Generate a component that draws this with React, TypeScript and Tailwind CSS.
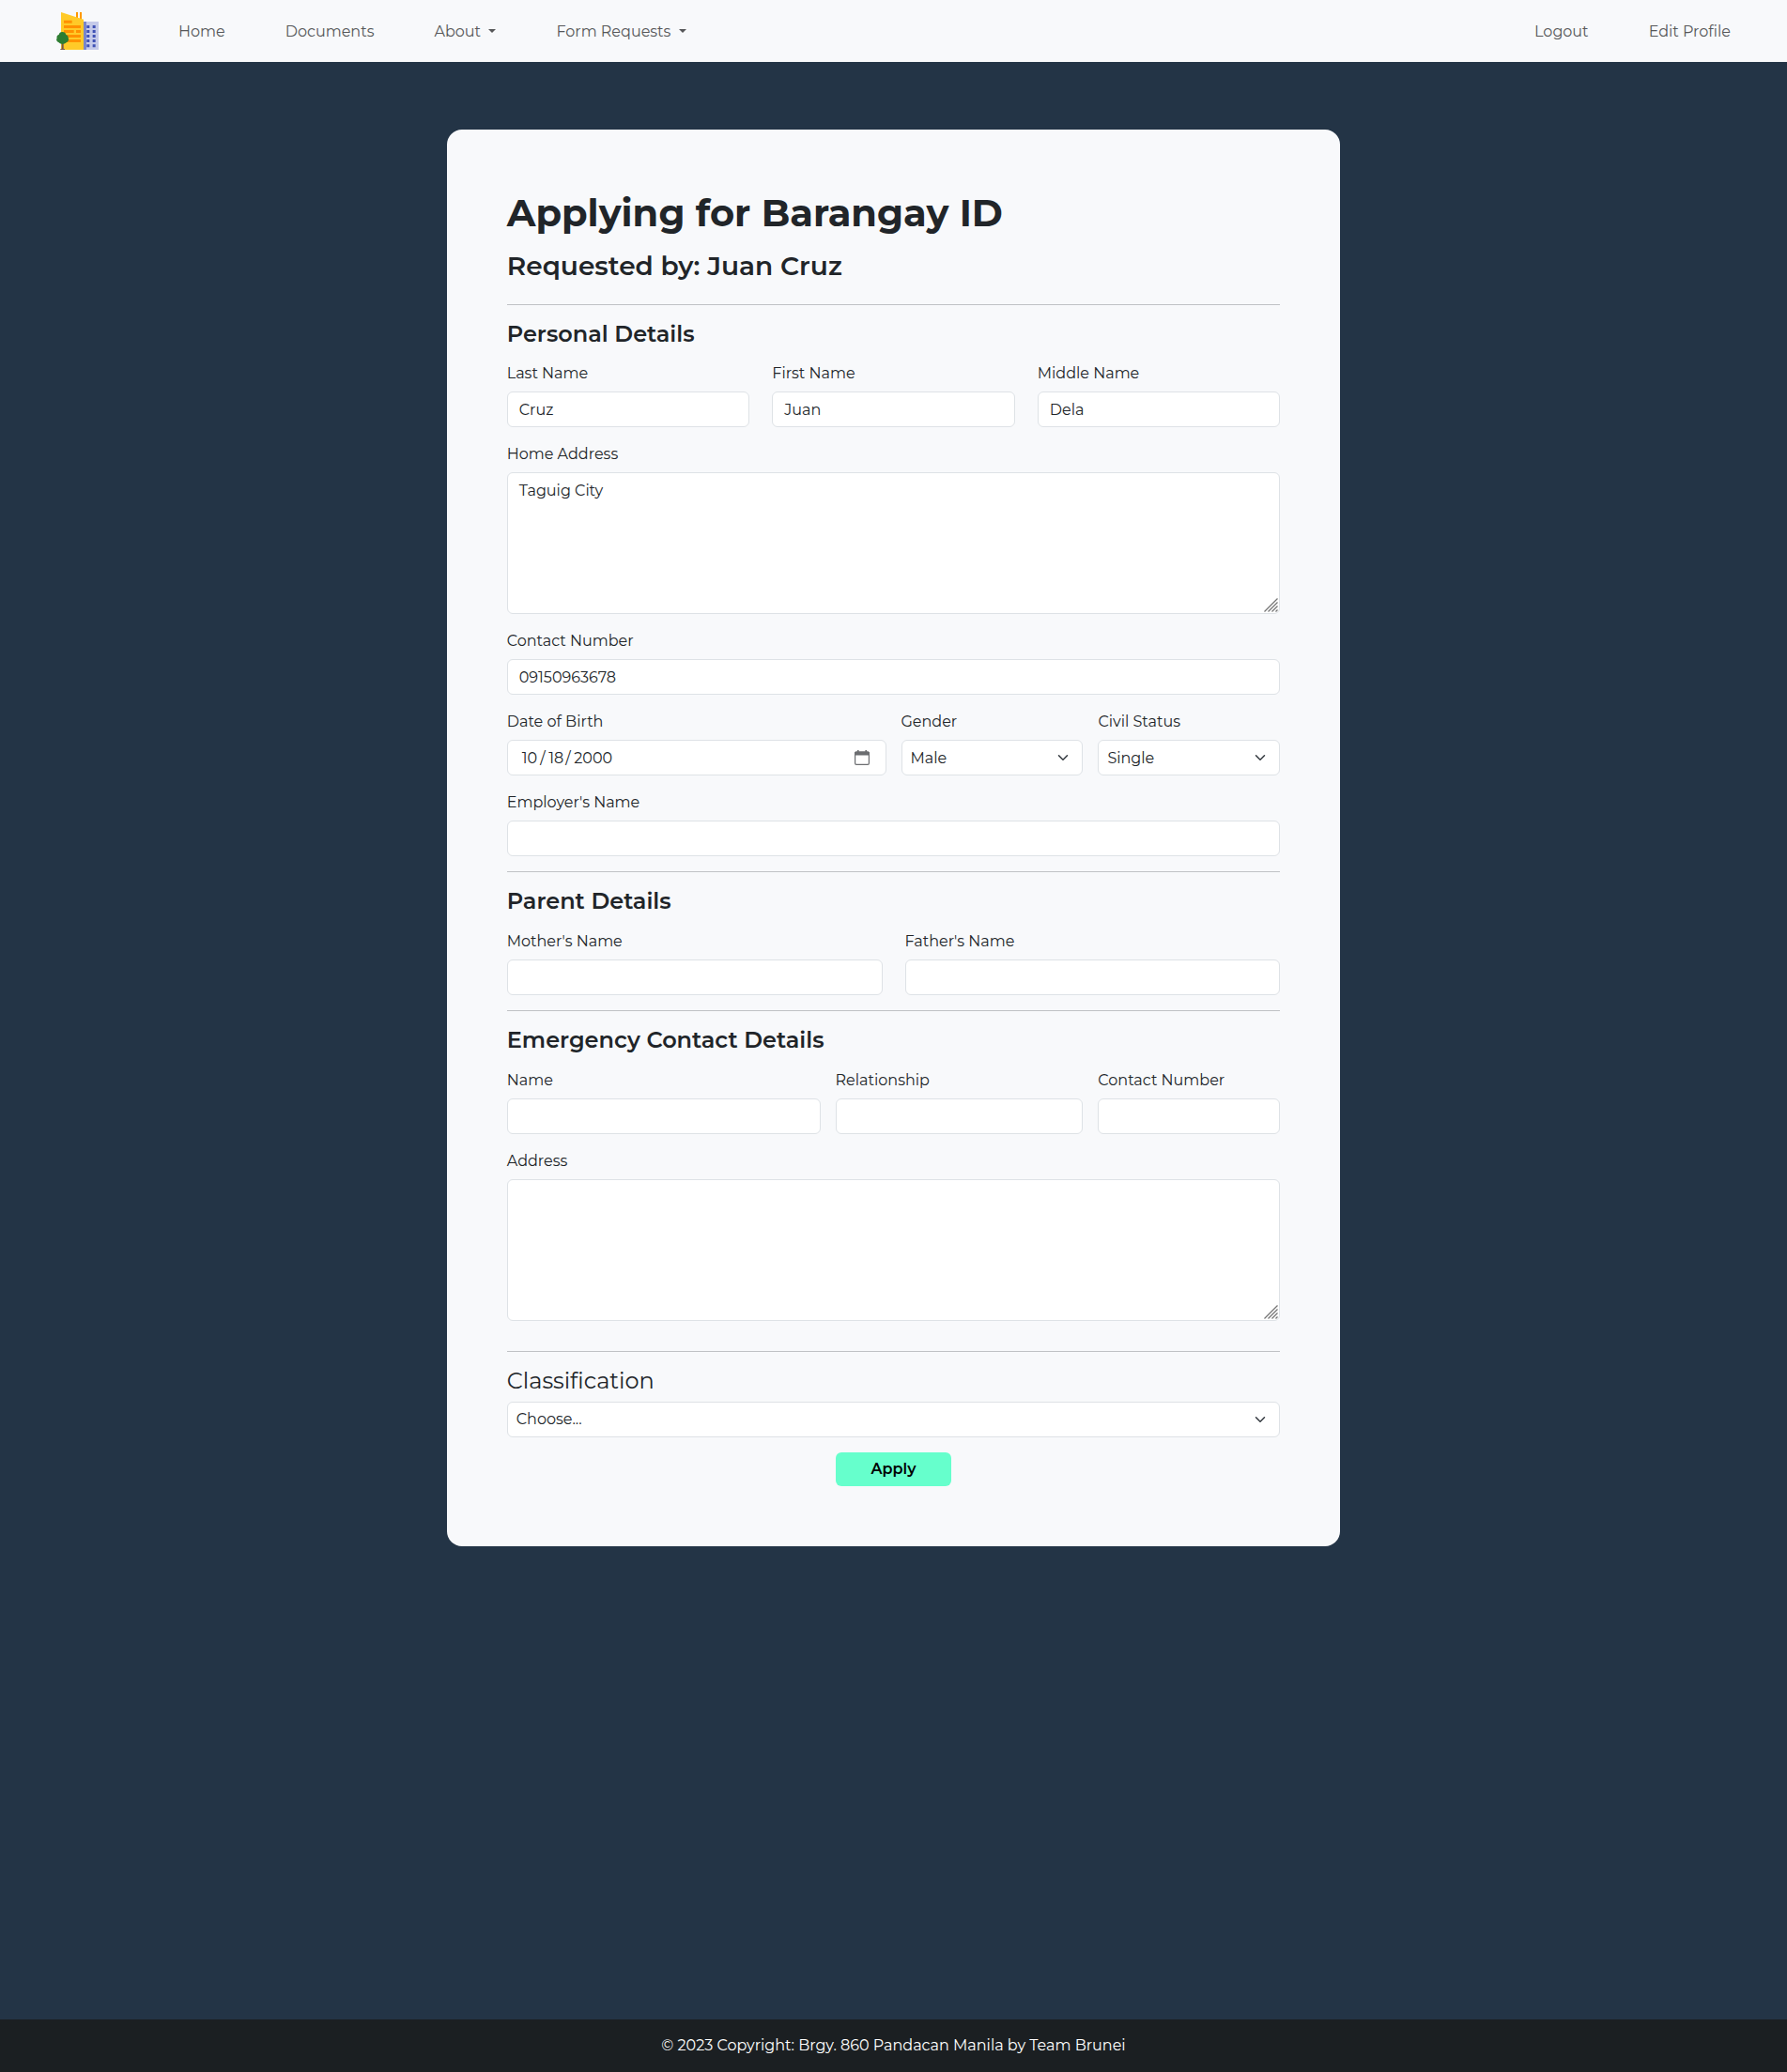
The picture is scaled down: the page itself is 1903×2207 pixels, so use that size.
import type { ReactNode } from "react";

function Logo() {
  return (
    <svg className="ml-[60px] h-10 w-[45px] shrink-0" viewBox="60 39 135 120" aria-label="Barangay buildings">
      <path fill="#ff9800" d="M123 39h6v24h-6zM135 39h6v24h-6z" />
      <path fill="#c5cae9" d="M148 69h47v90h-47z" />
      <path fill="#7986cb" d="M147 69h9v90h-9z" />
      <path
        fill="#3f51b5"
        d="M157 81h9v9h-9zM176 81h9v9h-9zM157 96h9v9h-9zM176 96h9v9h-9zM157 111h9v9h-9zM176 111h9v9h-9zM157 126h9v9h-9zM176 126h9v9h-9zM157 142h9v9h-9zM176 142h9v9h-9z"
      />
      <path fill="#ffca28" d="M75 39l72 23v97H75z" />
      <path fill="#ff9100" d="M84 65h26v9H84zM84 81h54v9H84zM84 96h32v9H84zM123 96h15v9h-15zM84 111h54v9H84zM84 126h54v9H84z" />
      <path fill="#795548" d="M77 132h6v27h-6zM73 156h14v3H73z" />
      <path
        fill="#2e7d32"
        d="M79 102c7 0 11 4 12 9 4 1 7 5 7 9 3 7 0 14-6 16-4 4-8 5-12 5s-9-1-12-5c-6-2-10-8-6-14-2-5 1-10 6-11 1-5 5-9 11-9z"
      />
    </svg>
  );
}

function Caret() {
  return <span className="mb-0.5 h-0 w-0 border-x-[4.8px] border-t-[4.8px] border-x-transparent border-t-[#565759]" />;
}

function Chevron() {
  return (
    <svg className="h-3 w-3 shrink-0" viewBox="0 0 16 16" fill="none" stroke="#343a40" strokeWidth="2" strokeLinecap="round" strokeLinejoin="round">
      <path d="m2 5 6 6 6-6" />
    </svg>
  );
}

function CalendarIcon() {
  return (
    <svg className="h-4 w-4 shrink-0" viewBox="0 0 16 16">
      <rect x="0.6" y="2" width="14.800" height="13.400" rx="1.3" fill="none" stroke="#6b6d70" strokeWidth="1.2" />
      <path fill="#6b6d70" d="M3 0h1.600v2H3zM11.400 0H13v2h-1.600zM0 5.600V3c0-1 .8-1.600 1.800-1.600h12.400c1 0 1.800.6 1.800 1.600v2.600z" />
    </svg>
  );
}

const box = "flex h-[38px] items-center rounded-md border border-[#dee2e6] bg-white";

function Field({ label, children }: { label: string; children: ReactNode }) {
  return (
    <div className="min-w-0">
      <div className="mb-2 h-6 whitespace-nowrap pt-px">{label}</div>
      {children}
    </div>
  );
}

function Input({ children }: { children?: ReactNode }) {
  return <div className={box + " px-3 pt-px"}>{children}</div>;
}

function Select({ children, textClass = "" }: { children: ReactNode; textClass?: string }) {
  return (
    <div className={box + " justify-between pl-[9px] pr-[14px]"}>
      <span className={textClass}>{children}</span>
      <Chevron />
    </div>
  );
}

function TextArea({ children }: { children?: ReactNode }) {
  return (
    <div className="relative h-[151px] rounded-md border border-[#dee2e6] bg-white px-3 pt-[7px]">
      {children}
      <svg className="absolute bottom-px right-px h-[15px] w-[15px]" viewBox="0 0 15 15" stroke="#757575" strokeWidth="1.3">
        <path d="M.5 14.500 14.500.5M4.500 14.500l10-10M8.500 14.500l6-6M12.500 14.500l2-2" />
      </svg>
    </div>
  );
}

function Rule() {
  return <div className="h-px shrink-0 bg-[#c0c2c5]" />;
}

export default function App() {
  return (
    <div className="flex h-[2207px] w-full flex-col bg-[#233446] font-[Montserrat,Inter,sans-serif] text-base leading-6 text-[#212529]">
      <nav className="flex h-[66px] shrink-0 items-center bg-[#f8f9fb] text-[#565759]">
        <Logo />
        <div className="ml-[85px] flex grow items-center gap-16 whitespace-nowrap pt-px">
          <a>Home</a>
          <a>Documents</a>
          <a className="flex w-[66px] items-center justify-between">
            About
            <Caret />
          </a>
          <a className="flex w-[139px] items-center justify-between">
            Form Requests
            <Caret />
          </a>
        </div>
        <div className="mr-[60px] flex gap-16 whitespace-nowrap pt-px">
          <a>Logout</a>
          <a>Edit Profile</a>
        </div>
      </nav>

      <main className="mx-auto mt-[72px] flex h-[1509px] w-1/2 shrink-0 flex-col rounded-2xl bg-[#f8f9fb] p-16">
        <h1 className="mb-[15px] mt-px h-12 whitespace-nowrap text-[40px] font-bold leading-[48px]">Applying for Barangay ID</h1>
        <h2 className="mb-6 h-[34px] whitespace-nowrap text-[28px] font-semibold leading-[34px]">Requested by: Juan Cruz</h2>
        <Rule />
        <h3 className="mb-[15px] mt-4 h-[29px] whitespace-nowrap text-2xl font-semibold leading-[29px]">Personal Details</h3>

        <div className="mb-4 grid grid-cols-3 gap-6">
          <Field label="Last Name">
            <Input>Cruz</Input>
          </Field>
          <Field label="First Name">
            <Input>Juan</Input>
          </Field>
          <Field label="Middle Name">
            <Input>Dela</Input>
          </Field>
        </div>

        <div className="mb-4">
          <Field label="Home Address">
            <TextArea>Taguig City</TextArea>
          </Field>
        </div>

        <div className="mb-4">
          <Field label="Contact Number">
            <Input>09150963678</Input>
          </Field>
        </div>

        <div className="mb-4 grid grid-cols-[403.75px_1fr_1fr] gap-4">
          <Field label="Date of Birth">
            <div className={box + " justify-between pl-[15px] pr-[17px]"}>
              <div className="flex pt-px">
                <span className="w-[19.500px]">10</span>
                <span className="w-[9px]">/</span>
                <span className="w-[18px]">18</span>
                <span className="w-[9px]">/</span>
                <span>2000</span>
              </div>
              <CalendarIcon />
            </div>
          </Field>
          <Field label="Gender">
            <Select textClass="pt-px">Male</Select>
          </Field>
          <Field label="Civil Status">
            <Select textClass="pt-px">Single</Select>
          </Field>
        </div>

        <div className="mb-4">
          <Field label="Employer's Name">
            <Input />
          </Field>
        </div>
        <Rule />

        <h3 className="mb-4 mt-4 h-[29px] whitespace-nowrap text-2xl font-semibold leading-[29px]">Parent Details</h3>
        <div className="mb-4 grid grid-cols-2 gap-6">
          <Field label="Mother's Name">
            <Input />
          </Field>
          <Field label="Father's Name">
            <Input />
          </Field>
        </div>
        <Rule />

        <h3 className="mb-4 mt-4 h-[29px] whitespace-nowrap text-2xl font-semibold leading-[29px]">Emergency Contact Details</h3>
        <div className="mb-4 grid grid-cols-[333.8px_263.8px_1fr] gap-4">
          <Field label="Name">
            <Input />
          </Field>
          <Field label="Relationship">
            <Input />
          </Field>
          <Field label="Contact Number">
            <Input />
          </Field>
        </div>
        <div className="mb-8">
          <Field label="Address">
            <TextArea />
          </Field>
        </div>
        <Rule />

        <h3 className="mb-2 mt-4 h-[29px] whitespace-nowrap text-2xl font-normal leading-[29px]">Classification</h3>
        <Select>Choose...</Select>
        <button className="mx-auto mt-4 h-9 w-[123px] shrink-0 rounded-md bg-[#66ffcc] font-semibold text-black">Apply</button>
      </main>

      <footer className="mt-auto flex h-14 shrink-0 items-center justify-center bg-[#1b1f22] text-white">
        © 2023 Copyright: Brgy. 860 Pandacan Manila by Team Brunei
      </footer>
    </div>
  );
}
